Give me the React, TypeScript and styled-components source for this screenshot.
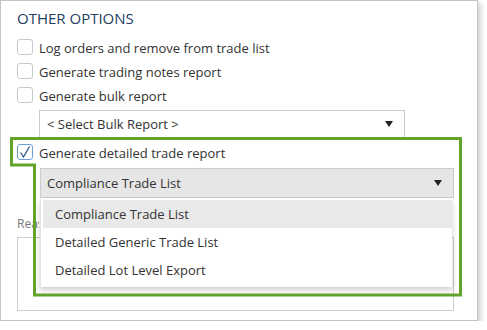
import styled, { createGlobalStyle } from 'styled-components';

const GlobalStyle = createGlobalStyle`
  html, body {
    margin: 0;
    padding: 0;
    background: #ffffff;
  }
  body {
    font-family: 'Open Sans', 'Noto Sans', sans-serif;
    color: #333333;
  }
`;

const options = [
  'Log orders and remove from trade list',
  'Generate trading notes report',
  'Generate bulk report',
];

const reports = [
  'Compliance Trade List',
  'Detailed Generic Trade List',
  'Detailed Lot Level Export',
];

const App = () => {
  return (
    <>
      <GlobalStyle />
      <Panel>
        <Heading>OTHER OPTIONS</Heading>
        {options.map((label) => (
          <CheckRow key={label}>
            <Box />
            <Label>{label}</Label>
          </CheckRow>
        ))}
        <BulkSelect>
          <span>&lt; Select Bulk Report &gt;</span>
          <Caret />
        </BulkSelect>
        <CheckRow>
          <Box checked>
            <svg width="14" height="14" viewBox="0 0 14 14">
              <path d="M2.5 7.5 L5.5 12 L11.5 1.5" fill="none" stroke="#2f5b8c" strokeWidth="1.3" />
            </svg>
          </Box>
          <Label>Generate detailed trade report</Label>
        </CheckRow>
        <SelectWrap>
          <ReportSelect>
            <span>Compliance Trade List</span>
            <Caret />
          </ReportSelect>
          <Menu>
            {reports.map((r, i) => (
              <MenuItem key={r} active={i === 0}>
                {r}
              </MenuItem>
            ))}
          </Menu>
        </SelectWrap>
        <FieldLabel>Reason</FieldLabel>
        <TextBox />
        <Highlight width="478" height="322" viewBox="0 0 478 322">
          <path
            d="M11.5 138.5 H460.5 V295 H34.5 V165 H11.5 Z"
            fill="none"
            stroke="#62a32b"
            strokeWidth="3"
          />
        </Highlight>
      </Panel>
    </>
  );
};

export default App;

const Panel = styled.div`
  position: relative;
  box-sizing: border-box;
  width: 478px;
  height: 321px;
  border: 1px solid #c4c4c4;
  background: #ffffff;
  box-shadow: 3px 3px 5px rgba(0, 0, 0, 0.18);
  padding: 7px 0 0 16px;
  display: flex;
  flex-direction: column;
  align-items: flex-start;
`;

const Heading = styled.div`
  font-size: 15px;
  line-height: 20px;
  color: #22405e;
  margin-bottom: 7px;
`;

const CheckRow = styled.div`
  display: flex;
  align-items: center;
  height: 24px;
  gap: 6px;
`;

const Box = styled.div<{ checked?: boolean }>`
  box-sizing: border-box;
  width: 16px;
  height: 16px;
  border: 1px solid ${(p) => (p.checked ? '#6d9fd6' : '#c8c8c8')};
  border-radius: 3px;
  background: #ffffff;
  display: flex;
  align-items: center;
  justify-content: center;
`;

const Label = styled.span`
  font-size: 13px;
  color: #333333;
  position: relative;
  top: 1px;
`;

const Caret = styled.i`
  width: 0;
  height: 0;
  border-left: 4px solid transparent;
  border-right: 4px solid transparent;
  border-top: 6px solid #222222;
`;

const BulkSelect = styled.div`
  box-sizing: border-box;
  margin: 3px 0 2px 22px;
  width: 366px;
  height: 28px;
  border: 1px solid #cccccc;
  display: flex;
  align-items: center;
  justify-content: space-between;
  padding: 0 11px 0 7px;
  font-size: 13px;
  color: #333333;
`;

const SelectWrap = styled.div`
  position: relative;
  margin: 4px 0 0 23px;
`;

const ReportSelect = styled.div`
  box-sizing: border-box;
  width: 414px;
  height: 30px;
  background: #e6e6e6;
  border: 1px solid #cccccc;
  display: flex;
  align-items: center;
  justify-content: space-between;
  padding: 0 11px 0 6px;
  font-size: 13px;
  color: #333333;
`;

const Menu = styled.div`
  position: absolute;
  z-index: 2;
  top: 31px;
  left: 0;
  box-sizing: border-box;
  width: 412px;
  padding: 1px 0 3px 2px;
  background: #ffffff;
  border-left: 1px solid #e4e4e4;
  box-shadow: 0 3px 6px rgba(0, 0, 0, 0.2);
`;

const MenuItem = styled.div<{ active?: boolean }>`
  height: 28px;
  display: flex;
  align-items: center;
  padding-left: 12px;
  font-size: 13px;
  color: #333333;
  background: ${(p) => (p.active ? '#e9e9e9' : 'transparent')};
`;

const FieldLabel = styled.div`
  margin-top: 16px;
  width: 22px;
  height: 20px;
  overflow: hidden;
  line-height: 20px;
  font-size: 12px;
  color: #777777;
  white-space: nowrap;
`;

const TextBox = styled.div`
  box-sizing: border-box;
  margin-top: 3px;
  width: 437px;
  height: 74px;
  border: 1px solid #cccccc;
`;

const Highlight = styled.svg`
  position: absolute;
  top: -1px;
  left: -1px;
  z-index: 3;
  pointer-events: none;
`;
